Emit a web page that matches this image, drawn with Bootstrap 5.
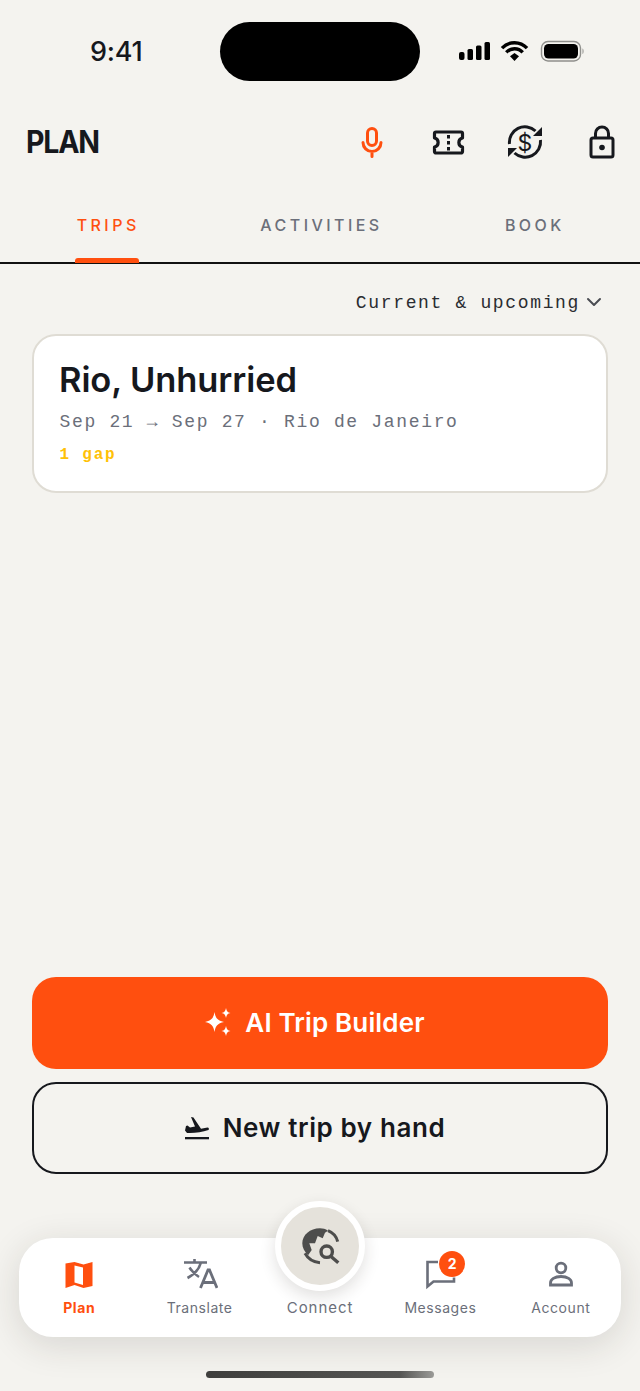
<!DOCTYPE html>
<html lang="en">
<head>
    <meta charset="UTF-8">
    <meta name="viewport" content="width=device-width, initial-scale=1.0">
    <title>Plan</title>
    <link href="https://cdn.jsdelivr.net/npm/bootstrap@5.3.3/dist/css/bootstrap.min.css" rel="stylesheet">
    <style>
        body {
            background: #f4f3ef;
            color: #16181d;
            font-family: Inter, "Liberation Sans", sans-serif;
            width: 640px;
            height: 1391px;
            overflow: hidden;
        }
        .phone-shell { height: 1391px; }
        .status-row { height: 100px; padding: 22px 55px 19px 90px; }
        .status-time { font-size: 27px; font-weight: 500; width: 130px; line-height: 59px; letter-spacing: -.2px; }
        .island { width: 200px; height: 59px; background: #000; border-radius: 30px; }
        .status-icons { width: 126px; margin-left: 39px; }
        .head-row { height: 84px; padding-left: 26px; }
        .head-title { font-size: 31px; font-weight: 700; letter-spacing: -1.3px; line-height: 1; margin: -2px 0 0; transform: scaleX(.92); transform-origin: left; }
        .head-icons { margin-right: 18px; gap: 36.6px; }
        .tab-row { height: 80px; border-bottom: 2px solid #111; margin: 0; }
        .tab-link {
            display: block;
            position: relative;
            height: 78px;
            padding: 32px 0 0 3px;
            font-size: 16px;
            line-height: 19px;
            font-weight: 500;
            letter-spacing: 3.45px;
            color: #6b6f7a;
        }
        .tab-link.active { color: #ff4f0f; }
        .tab-link.active::after {
            content: "";
            position: absolute;
            left: 50%;
            bottom: -1px;
            width: 64px;
            height: 5px;
            margin-left: -32px;
            background: #ff4f0f;
            border-radius: 3px 3px 0 0;
        }
        .mono-text { font-family: "Liberation Mono", "DejaVu Sans Mono", monospace; }
        .filter-row { height: 70px; padding: 26px 38px 0 0; font-size: 18px; line-height: 26px; letter-spacing: 1.65px; color: #2a2c31; gap: 6px; }
        .trip-card {
            margin: 0 32px;
            height: 159px;
            padding: 24px 26px;
            border: 2px solid #dfdcd4;
            border-radius: 24px;
        }
        .trip-title { font-size: 34.5px; font-weight: 600; line-height: 42px; letter-spacing: -.1px; margin: -1px 0 9px -1px; }
        .trip-meta { font-size: 18px; line-height: 24px; letter-spacing: 1.67px; color: #6b6f7a; margin-left: -.5px; }
        .trip-gap { font-size: 16px; line-height: 20px; font-weight: 700; letter-spacing: 1.8px; color: #ffc107; margin: 11px 0 0 -.5px; }
        .action-stack { margin: 0 32px 64px; gap: 13px; }
        .action-btn {
            height: 92px;
            border-radius: 24px;
            font-size: 26px;
            font-weight: 600;
            gap: 13px;
            padding: 0 11px 2px 0;
        }
        .action-fill { background: #ff4f0f; border: 0; color: #fff; letter-spacing: .15px; }
        .action-line { border: 2.5px solid #16181d; color: #16181d; background: transparent; letter-spacing: .6px; }
        .tab-dock {
            position: relative;
            height: 99px;
            margin: 0 19px 54px;
            background: #fff;
            border-radius: 34px;
            box-shadow: 0 8px 36px rgba(40, 38, 30, .14);
        }
        .dock-item { flex: 1 1 0; position: relative; padding-top: 20px; color: #6b6f7a; }
        .dock-item.active { color: #ff4f0f; font-weight: 700; }
        .dock-icon { display: block; height: 34px; margin: 0 auto; }
        .dock-label { display: block; font-size: 14px; line-height: 18px; letter-spacing: .55px; margin-top: 7px; }
        .connect-label { font-size: 15px; letter-spacing: .95px; margin-top: 41px; }
        .connect-btn {
            position: absolute;
            left: 256px;
            top: -37px;
            width: 90px;
            height: 90px;
            background: #e5e2db;
            border: 6px solid #fff;
            border-radius: 50%;
            box-shadow: 0 6px 16px rgba(40, 38, 30, .14);
        }
        .msg-count {
            position: absolute;
            left: 59px;
            top: 13px;
            width: 26px;
            height: 26px;
            line-height: 26px;
            border-radius: 50%;
            background: #ff4f0f;
            color: #fff;
            font-size: 14px;
            font-weight: 700;
            text-align: center;
        }
        .home-bar {
            position: absolute;
            left: 206px;
            top: 1371px;
            width: 228px;
            height: 7px;
            border-radius: 4px;
            background: linear-gradient(90deg, #3f3f3d 0%, #555553 85%, #9a9a97 100%);
        }
    </style>
</head>
<body>
    <div class="phone-shell d-flex flex-column">
        <!-- status bar -->
        <div class="status-row d-flex align-items-start">
            <div class="status-time text-start flex-shrink-0">9:41</div>
            <div class="island flex-shrink-0"></div>
            <div class="status-icons d-flex align-items-center flex-shrink-0" style="height:59px">
                <svg width="126" height="24" viewBox="0 0 126 24">
                    <rect x="0" y="12" width="5.5" height="8" rx="2"/>
                    <rect x="8.5" y="9" width="5.5" height="11" rx="1.5"/>
                    <rect x="17" y="5.5" width="5.500" height="14.500" rx="1.500"/>
                    <rect x="25.500" y="2" width="5.500" height="18" rx="1.500"/>
                    <path d="M43 8.200a17 17 0 0 1 25 0" fill="none" stroke="#000" stroke-width="3.400"/>
                    <path d="M47.300 12.400a11 11 0 0 1 16.400 0" fill="none" stroke="#000" stroke-width="3.400"/>
                    <path d="M51 16.300l4.500-3.200 4.500 3.200-4.500 4.700z"/>
                    <rect x="82.500" y="1.500" width="39" height="19.500" rx="6.500" fill="none" stroke="#8f8f8c" stroke-width="1.400"/>
                    <rect x="85" y="4" width="34" height="14.500" rx="4.500"/>
                    <path d="M123.500 8.500c1.400.4 1.400 5 0 5.500z" fill="#8f8f8c"/>
                </svg>
            </div>
        </div>

        <!-- header -->
        <header class="head-row d-flex align-items-center justify-content-between">
            <h1 class="head-title">PLAN</h1>
            <div class="head-icons d-flex align-items-center">
                <svg width="40" height="40" viewBox="0 0 40 40" fill="none" stroke="#ff4f0f" stroke-width="3" stroke-linecap="round">
                    <rect x="15.500" y="6.500" width="9" height="17" rx="4.500"/>
                    <path d="M11 20.500a9 9 0 0 0 18 0M20 29.500v5"/>
                </svg>
                <svg width="40" height="40" viewBox="0 0 40 40" fill="none" stroke="#16181d" stroke-width="3.200" stroke-linejoin="round">
                    <path d="M7 10h25a1.500 1.500 0 0 1 1.500 1.500V16a4.600 4.600 0 0 0 0 9v4.500A1.500 1.500 0 0 1 32 31H7a1.500 1.500 0 0 1-1.500-1.500V25a4.600 4.600 0 0 0 0-9v-4.500A1.500 1.500 0 0 1 7 10z"/>
                    <g fill="#16181d" stroke="none">
                        <rect x="18" y="13" width="3" height="3.500"/>
                        <rect x="18" y="19" width="3" height="3.500"/>
                        <rect x="18" y="25" width="3" height="3.500"/>
                    </g>
                </svg>
                <svg width="40" height="40" viewBox="0 0 40 40" fill="none" stroke="#16181d" stroke-width="3">
                    <path d="M4.500 22a15.500 15.500 0 0 1 26-13"/>
                    <path d="M35.500 18a15.500 15.500 0 0 1-26 13"/>
                    <path d="M37 5v9h-9z" fill="#16181d" stroke="none"/>
                    <path d="M3 35v-9h9z" fill="#16181d" stroke="none"/>
                    <text x="20" y="28.500" text-anchor="middle" font-family="Inter, sans-serif" font-size="23" font-weight="400" fill="#16181d" stroke="none">$</text>
                </svg>
                <svg width="40" height="40" viewBox="0 0 40 40" fill="none" stroke="#16181d" stroke-width="3" stroke-linejoin="round">
                    <rect x="9" y="16" width="22" height="19" rx="2"/>
                    <path d="M13.500 16v-4.500a6.500 6.500 0 0 1 13 0V16"/>
                    <circle cx="20" cy="25.500" r="2.800" fill="#16181d" stroke="none"/>
                </svg>
            </div>
        </header>

        <!-- tabs -->
        <nav class="tab-row nav nav-justified">
            <a class="nav-item tab-link active text-center text-decoration-none" href="#">TRIPS</a>
            <a class="nav-item tab-link text-center text-decoration-none" href="#">ACTIVITIES</a>
            <a class="nav-item tab-link text-center text-decoration-none" href="#">BOOK</a>
        </nav>

        <main class="flex-grow-1">
            <div class="filter-row mono-text d-flex justify-content-end align-items-start">
                <span>Current &amp; upcoming</span>
                <svg class="mt-1" width="16" height="18" viewBox="0 0 16 18" fill="none" stroke="#4a4c52" stroke-width="2" stroke-linecap="round" stroke-linejoin="round"><path d="M2 5l6 6 6-6"/></svg>
            </div>
            <div class="trip-card card">
                <h2 class="trip-title">Rio, Unhurried</h2>
                <div class="trip-meta mono-text">Sep 21 → Sep 27 · Rio de Janeiro</div>
                <div class="trip-gap mono-text">1 gap</div>
            </div>
        </main>

        <div class="action-stack d-flex flex-column">
            <button class="action-btn action-fill btn d-flex align-items-center justify-content-center" type="button">
                <svg width="28" height="28" viewBox="0 0 28 28" fill="#fff">
                    <path d="M10.500 4c1 6 3 8.500 9.500 10-6.500 1.500-8.500 4-9.500 10-1-6-3-8.500-9.500-10 6.500-1.500 8.500-4 9.500-10z"/>
                    <path d="M22 0c.6 3 1.500 4.400 4.500 5-3 .6-3.900 2-4.500 5-.6-3-1.500-4.400-4.500-5 3-.6 3.900-2 4.500-5z"/>
                    <path d="M22 18c.6 3 1.500 4.400 4.500 5-3 .6-3.900 2-4.500 5-.6-3-1.500-4.400-4.500-5 3-.6 3.900-2 4.500-5z"/>
                </svg>
                <span>AI Trip Builder</span>
            </button>
            <button class="action-btn action-line btn d-flex align-items-center justify-content-center" type="button">
                <svg width="26" height="26" viewBox="0 0 26 26" fill="#16181d">
                    <path d="M1 23h24v2.300H1z"/>
                    <path d="M1 16.500l2 2.500c7 .5 15-1 21.500-3 .8-1 .5-2.500-1-2.500l-6.500 1.300L9.500 3.500 7 3l4 9.500-5 1-2.500-2L2 12z"/>
                </svg>
                <span>New trip by hand</span>
            </button>
        </div>

        <!-- bottom tabs -->
        <nav class="tab-dock d-flex text-center flex-shrink-0">
            <a class="dock-item active text-decoration-none" href="#">
                <svg class="dock-icon" width="30" height="34" viewBox="0 0 30 34" fill="#ff4f0f">
                    <path fill-rule="evenodd" d="M1.500 5.500l9-1.500 9 2.500 9-2.500v24l-9 2-9-3-9 3zM10.500 7.500v17l8.500 2.500V9.500z"/>
                </svg>
                <span class="dock-label">Plan</span>
            </a>
            <a class="dock-item text-decoration-none" href="#">
                <svg class="dock-icon" width="36" height="34" viewBox="0 0 36 34" fill="none" stroke="#6b6f7a" stroke-width="2.600">
                    <path d="M2 4.500h23M12.500 1v3.500M19 4.500c-2 7-7 12-13.500 15.500M7.500 9.500c2.500 4 5.500 7 9.500 9.500"/>
                    <path d="M18.500 30l7.500-18h1.500l7.500 18M21 24.500h12" stroke-width="2.800"/>
                </svg>
                <span class="dock-label">Translate</span>
            </a>
            <div class="dock-item">
                <span class="dock-label connect-label">Connect</span>
            </div>
            <a class="dock-item text-decoration-none" href="#">
                <svg class="dock-icon" width="34" height="34" viewBox="0 0 34 34" fill="none" stroke="#6b6f7a" stroke-width="2.600">
                    <path d="M15 4H4.500v24.500l6-5H31v-4"/>
                </svg>
                <span class="msg-count">2</span>
                <span class="dock-label">Messages</span>
            </a>
            <a class="dock-item text-decoration-none" href="#">
                <svg class="dock-icon" width="30" height="34" viewBox="0 0 30 34" fill="none" stroke="#6b6f7a" stroke-width="2.800">
                    <circle cx="15" cy="10" r="4.800"/>
                    <path d="M4.500 27v-2c0-3.500 4-6.500 10.500-6.500s10.500 3 10.500 6.500v2z"/>
                </svg>
                <span class="dock-label">Account</span>
            </a>
            <button class="connect-btn btn p-0 d-flex align-items-center justify-content-center" type="button" aria-label="Connect search">
                <svg width="44" height="44" viewBox="0 0 44 44" fill="none">
                    <path d="M30 6.700C27.500 5 24.800 4.300 22 4.300 12 4.300 4.300 11 4.300 19.300c0 4.500 2 8.500 6 11.700l3.400-5-2.400-6.700H17l2.700-7.300 5 2.300 2.300-5.600z" fill="#4d4d4c"/>
                    <path d="M30 6.700c5 2 8.500 6 9.700 11" stroke="#4d4d4c" stroke-width="3"/>
                    <path d="M7 29.300c3 5.500 9 9 15 9.400" stroke="#4d4d4c" stroke-width="3"/>
                    <circle cx="28.700" cy="27.700" r="5.700" stroke="#4d4d4c" stroke-width="3.400"/>
                    <path d="M33.300 32.800l7 6" stroke="#4d4d4c" stroke-width="3.400"/>
                </svg>
            </button>
        </nav>
    </div>
    <div class="home-bar"></div>

    <script src="https://cdn.jsdelivr.net/npm/bootstrap@5.3.3/dist/js/bootstrap.bundle.min.js"></script>
</body>
</html>
